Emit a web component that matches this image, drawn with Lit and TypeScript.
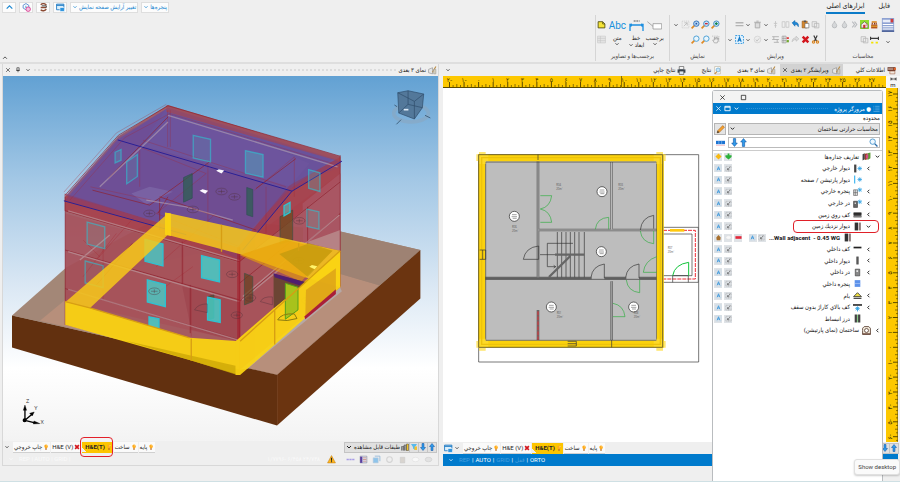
import { LitElement, html, svg, css, nothing } from "lit";
import { customElement, property } from "lit/decorators.js";
import { classMap } from "lit/directives/class-map.js";

const fa = (n: number) => String(Math.abs(n)).replace(/\d/g, (d) => "۰۱۲۳۴۵۶۷۸۹"[+d]) + (n < 0 ? "-" : "");

/* Glyphs on a 16 by 16 grid */
const glyphs: Record<string, unknown> = {
  caret: svg`<path d="M4 6l4 4 4-4" fill="none" stroke="currentColor" stroke-width="2"/>`,
  up: svg`<path d="M3 10l5-5 5 5" fill="none" stroke="currentColor" stroke-width="2"/>`,
  open: svg`<path d="M10 4L6 8l4 4" fill="none" stroke="currentColor" stroke-width="2"/>`,
  close: svg`<path d="M3 3l10 10M13 3L3 13" fill="none" stroke="currentColor" stroke-width="1.6"/>`,
  box: svg`<path d="M3 3h10v10H3z" fill="none" stroke="currentColor" stroke-width="1.6"/>`,
  dock: svg`<path d="M2 3h12v10H2z M2 5h12" fill="none" stroke="currentColor" stroke-width="2"/>`,
  pin: svg`<path d="M5 2h6v7H5zM3 9h10M8 9v5" fill="none" stroke="currentColor" stroke-width="1.6"/>`,
  calc: svg`<path d="M1 0h14v16H1z" fill="#8ea2d2"/><path d="M2 2h9v3H2z" fill="#e9edf8"/><path d="M11 1h3v4h-3z" fill="#d03a3a"/><path d="M2 7.500h12M2 10h12M2 12.500h12" stroke="#fff" stroke-width="1.200"/><path d="M1 15h14" stroke="#41558d" stroke-width="1.500"/>`,
  heat: svg`<path d="M2 8h11v7H2z" fill="#b5541c"/><path d="M3 2h9v3H3z" fill="#e0922e"/><path d="M4 5v3M8 5v3M11 5v3" stroke="#8b3514" stroke-width="2"/><path d="M2 11h11" stroke="#f4c33a" stroke-width="1.500"/>`,
  house: svg`<rect width="16" height="16" fill="#8fdc2c"/><path d="M2 8l6-5 6 5v6H2z" fill="#f2f2e9" stroke="#444"/><path d="M6 9h3v5H6zM11 6v5" fill="#c33" stroke="#c33"/>`,
  waves: svg`<path d="M4 3l4 5-4 5M8 3l4 5-4 5" fill="none" stroke="#b9bcbf" stroke-width="2"/>`,
  drop: svg`<path d="M8 2c1 4 4 5 4 8a4 4 0 0 1-8 0c0-3 3-4 4-8z" fill="#d5d7d9" stroke="#aeb1b4" stroke-width="1.300"/>`,
  span: svg`<path d="M1 3v6M15 3v6M1 6h14" stroke="#3a3a3a" stroke-width="2"/><path d="M2 12h4v3H2zM10 12h4v3h-4z" fill="#f3e400"/>`,
  extent: svg`<path d="M1 4v8M15 4v8M2 8h12M5 5L2 8l3 3M11 5l3 3-3 3" fill="none" stroke="#222" stroke-width="1.800"/>`,
  copy: svg`<path d="M2 3h8v9H2zM6 6h8v8H6z" fill="#ececec" stroke="#b5b5b5" stroke-width="1.300"/>`,
  paste: svg`<path d="M2 2h9v12H2z" fill="#d7882e" stroke="#8c5318"/><path d="M7 6h7v8H7z" fill="#fff" stroke="#555"/><path d="M5 1h4v3H5z" fill="#555"/>`,
  undo: svg`<path d="M2 5l5-4v3c5 0 7 3 6 8-1-3-3-4-6-4v3z" fill="#1f87d5" stroke="#1167ad"/>`,
  split: svg`<path d="M2 3h5v10H2zM9 3h5v10H9z" fill="none" stroke="#c9c9c9" stroke-width="1.500"/>`,
  pole: svg`<path d="M8 2v12M5 6h6M6 10h4" stroke="#c2c2c2" stroke-width="1.500"/>`,
  trash: svg`<path d="M4 5h8v9H4zM2 4h12M6 2h4" fill="#ddd" stroke="#aaa" stroke-width="1.600"/>`,
  lines: svg`<path d="M1 5h14M1 10h14" stroke="#b4b4b4" stroke-width="2.500"/>`,
  cut: svg`<path d="M5 1l5 10M11 1L6 11" stroke="#333" stroke-width="2"/><circle cx="4.500" cy="12.500" r="2" fill="none" stroke="#d98420" stroke-width="2"/><circle cx="11.500" cy="12.500" r="2" fill="none" stroke="#d98420" stroke-width="2"/>`,
  del: svg`<path d="M3 3l10 10M13 3L3 13" stroke="#d3171e" stroke-width="4.500"/>`,
  redo: svg`<path d="M2 12c0-5 3-7 7-7V2l5 5-5 4V8c-3 0-5 1-7 4z" fill="#ddd" stroke="#b5b5b5"/>`,
  gridcut: svg`<path d="M2 2h7v12H2zM2 6h7M2 10h7M5 2v12" fill="#eee" stroke="#888"/><path d="M10 4h4v3h-4z" fill="#d33"/><path d="M10 9h4v4h-4z" fill="#72a82f"/>`,
  table: svg`<path d="M2 3h12M2 8h12M5 13h9M5 3v5M11 8v5" fill="none" stroke="#b0b0b0" stroke-width="1.600"/>`,
  tick: svg`<circle cx="8" cy="8" r="6" fill="#ececec" stroke="#cacaca"/><path d="M5 8l2 3 4-5" fill="none" stroke="#c0c0c0" stroke-width="1.500"/>`,
  seltext: svg`<path d="M1 1h14v14H1z" fill="#e3f3ff" stroke="#2492de" stroke-width="1.600" stroke-dasharray="3 2"/><path d="M5 12l3-8 3 8M6 9h4" fill="none" stroke="#1277c4" stroke-width="2"/>`,
  select: svg`<path d="M2 2h12v12H2z" fill="none" stroke="#bbb" stroke-dasharray="2 1.500"/><path d="M5 11l6-6M6 5h5v5" stroke="#bbb" fill="none" stroke-width="1.500"/>`,
  zoomin: svg`<path d="M1 15l5-5" stroke="#e08a25" stroke-width="3"/><circle cx="9.500" cy="6.500" r="4.800" fill="#d2e9fa" stroke="#3483bf" stroke-width="1.600"/><path d="M7 6.500h5M9.500 4v5" stroke="#15834b" stroke-width="2.200"/>`,
  zoomout: svg`<path d="M1 15l5-5" stroke="#e08a25" stroke-width="3"/><circle cx="9.500" cy="6.500" r="4.800" fill="#d2e9fa" stroke="#3483bf" stroke-width="1.600"/><path d="M7 6.500h5" stroke="#c62a38" stroke-width="2.500"/>`,
  zoomall: svg`<path d="M1 15l5-5" stroke="#e08a25" stroke-width="3"/><circle cx="9.500" cy="6.500" r="4.800" fill="#b9dcf6" stroke="#2a6bb5" stroke-width="1.600"/><path d="M8 5h3v3H8z" fill="#2a52a5"/>`,
  zoom: svg`<path d="M1 15l5-5" stroke="#e08a25" stroke-width="3"/><circle cx="9.500" cy="6.500" r="4.800" fill="#e8f5fd" stroke="#3f9ad2" stroke-width="1.600"/>`,
  search: svg`<path d="M15 15l-5-5" stroke="#2b6ca8" stroke-width="2.500"/><circle cx="6.500" cy="6.500" r="4.800" fill="#eef8ff" stroke="#3f8fcb" stroke-width="1.500"/>`,
  hand: svg`<path d="M3 9l3 5h5l2-5V5l-2 3V4H9v3H7V4H6v5z" fill="#eee" stroke="#999" stroke-width="1.200"/><path d="M2 2h12v12" fill="none" stroke="#999" stroke-dasharray="2 2"/>`,
  note: svg`<path d="M2 3h8l4 4v7H2z" fill="#f5e437" stroke="#4c4a10" stroke-width="1.500"/><path d="M10 3v4h4" fill="none" stroke="#4c4a10" stroke-width="1.300"/>`,
  image: svg`<path d="M1 2h14v12H1z" fill="#e5e5e5" stroke="#c5c5c5"/><path d="M1 6h14M1 10h14M6 2v12" stroke="#c5c5c5"/>`,
  build: svg`<path d="M1 6l7-3v11l-7-2z" fill="#e6e6e6" stroke="#888"/><path d="M14 1L8 11" stroke="#b98b45" stroke-width="2"/><path d="M10 6h4v8h-4z" fill="#d9d0bb" stroke="#999"/>`,
  info: svg`<path d="M1 2h14v7H1z" fill="#6a3a2d"/><path d="M2 4h9M2 6h9" stroke="#f6dccb"/><path d="M5 9h9v5H5z" fill="#f1e8df" stroke="#9d5a3b"/><path d="M12 3h4v4h-4z" fill="#e2662c"/>`,
  doc: svg`<path d="M3 1h10v13H3z" fill="#fff" stroke="#b2a98f"/><circle cx="9" cy="7" r="3.500" fill="#c6e5f8" stroke="#4f94c2"/><path d="M7 10l-4 4" stroke="#c98735" stroke-width="2"/>`,
  print: svg`<path d="M4 1h8v5H4z" fill="#fff" stroke="#333"/><path d="M1 6h14v6H1z" fill="#3d4856"/><path d="M4 9h8v6H4z" fill="#dce8f2" stroke="#333"/>`,
  bulb: svg`<path d="M8 1a5 5 0 0 1 4 8l-2 2H6L4 8a5 5 0 0 1 4-7z" fill="#ffab1c"/><path d="M6 11h4v4H6z" fill="#b56a20"/><path d="M10 3c1 1 1 2 0 3" stroke="#fff0b0" stroke-width="2" fill="none"/>`,
  layout: svg`<path d="M1 2h13v10H1z" fill="#d9effc" stroke="#1b78c2" stroke-width="1.500"/><path d="M1 4h13" stroke="#1b78c2" stroke-width="2"/><path d="M7 8h8v7H7z" fill="#2e94de" stroke="#fff"/>`,
  bug: svg`<path d="M3 3c4-3 9-2 10 1M3 8h10M3 12c3 3 8 2 10-1" fill="none" stroke="#8b4a33" stroke-width="2.500"/><path d="M5 5h8v3" fill="none" stroke="#333" stroke-width="1.500"/>`,
  hexes: svg`<path d="M7 1l5 3v5l-5 3-5-3V4z" fill="none" stroke="#4b84d0" stroke-width="1.500"/><path d="M7 4l-2 4 4 1z" fill="#49b3e5"/><circle cx="11" cy="11" r="4" fill="#f6c0df" stroke="#d53c91" stroke-width="1.500"/>`,
  pencil: svg`<path d="M2 14l1-4L12 1l3 3-9 9z" fill="#f6a02c" stroke="#a2611d"/><path d="M2 14l1-4 3 3z" fill="#333"/>`,
  bricks: svg`<path d="M0 5h16v6H0z" fill="#1b73d2"/><path d="M5 5v6M10 5v6" stroke="#9dcbf4"/><path d="M0 13h16" stroke="#e88c9c"/>`,
  down: svg`<path d="M6 1h4v8h3l-5 6-5-6h3z" fill="#2f9bea" stroke="#0c4fa0"/>`,
  arrowup: svg`<path d="M6 15h4V7h3L8 1 3 7h3z" fill="#2f9bea" stroke="#0c4fa0"/>`,
  list: svg`<path d="M1 3h2M5 3h10M1 7h2M5 7h10M1 11h2M5 11h10M1 15h14" stroke="#6fb6e8" stroke-width="1.500"/>`,
  defs: svg`<path d="M1 4l4-2v11l-4 2z" fill="#444"/><path d="M5 3l5-1v11l-5 1z" fill="#9a3a25"/><path d="M10 2l5-1v10l-5 3z" fill="#5d9b3a"/><path d="M7 5l4-1v7l-4 1z" fill="#d44c8a"/>`,
  wallout: svg`<path d="M2 1h4v14H2z" fill="#444"/><path d="M12 4v8M8 8h8M9 5l6 6M15 5l-6 6" stroke="#2ba0e5" stroke-width="1.300"/>`,
  curtain: svg`<path d="M3 1v14" stroke="#35b2ef" stroke-width="2"/><path d="M12 4v8M8 8h8M9 5l6 6M15 5l-6 6" stroke="#2ba0e5" stroke-width="1.300"/>`,
  winout: svg`<path d="M1 5h7v10H1zM1 10h7M4 5v10" fill="#ddd" stroke="#555"/><path d="M12 1v8M8 5h8M9 2l6 6M15 2L9 8" stroke="#2ba0e5" stroke-width="1.300"/>`,
  doorout: svg`<path d="M1 4h7v11H1z" fill="#666" stroke="#333"/><path d="M3 6h2v3H3z" fill="#eee"/><path d="M12 1v8M8 5h8M9 2l6 6M15 2L9 8" stroke="#2ba0e5" stroke-width="1.300"/>`,
  slab: svg`<path d="M1 4h14v9H1z" fill="#555"/><path d="M1 7h14" stroke="#111" stroke-width="2"/><path d="M1 12h14" stroke="#888" stroke-width="2"/>`,
  wallground: svg`<path d="M3 1h6v14H3z" fill="#333"/><path d="M10 1h4v14h-4z" fill="#8c7a78"/>`,
  floorin: svg`<path d="M1 3h14v3H1z" fill="#222"/>`,
  wallin: svg`<path d="M6 1h4v14H6z" fill="#444"/><path d="M9 2v12" stroke="#999"/>`,
  doorin: svg`<path d="M4 2h8v12H4z" fill="#888" stroke="#333"/><path d="M6 4h3v3H6z" fill="#eee"/>`,
  winin: svg`<path d="M3 2h10v12H3z" fill="#5d92ea"/><path d="M3 8h10" stroke="#b9d2fb"/>`,
  roof: svg`<path d="M1 10l7-7 7 7z" fill="#f0e043" stroke="#333" stroke-width="1.500"/><path d="M1 13h14" stroke="#333" stroke-width="2"/>`,
  garage: svg`<path d="M0 2h16v3H0z" fill="#333"/><path d="M8 6v9M4 10h8M5 7l6 6M11 7l-6 6" stroke="#2ba0e5" stroke-width="1.500"/>`,
  joint: svg`<path d="M3 1h4v14H3zM9 1h4v14H9z" fill="#444"/><path d="M8 1v14" stroke="#6ec06e" stroke-width="1.500"/>`,
  homeview: svg`<path d="M1 8V4l3-3h8l3 3v11H1z" fill="#efe6d8" stroke="#5b4335" stroke-width="1.500"/><circle cx="8" cy="8" r="3.500" fill="#fff" stroke="#5b4335" stroke-width="1.500"/><path d="M1 14h14" stroke="#6b4335" stroke-width="2"/>`,
  mark: svg`<path d="M2 2h12v12H2z" fill="none" stroke="#a7cdea" stroke-dasharray="2 1.500"/><path d="M5 12l3-8 3 8M6 9h4" fill="none" stroke="#3a97dd" stroke-width="2"/>`,
  cursor: svg`<path d="M2 3h12v11H2z" fill="none" stroke="#888" stroke-dasharray="2 1.500"/><path d="M12 4L6 11V7M6 11h4" fill="none" stroke="#555" stroke-width="1.500"/>`,
  plusy: svg`<path d="M8 1l7 7-7 7-7-7z" fill="#f7b914"/>`,
  plusg: svg`<path d="M6 1h4v4h5v4l-7 6-7-6V5h5z" fill="#2cb23a"/>`,
  home: svg`<path d="M3 8l5-6 5 6-1 6H4z" fill="#a8702e"/>`,
  minus: svg`<path d="M1 5h14v6H1z" fill="#e3283b"/>`,
  warn: svg`<path d="M8 1l7 13H1z" fill="#ffb81f" stroke="#c77e10"/><path d="M8 5v5M8 11v2" stroke="#222" stroke-width="2"/>`,
  glasses: svg`<path d="M1 8h14" stroke="#a79ce6" stroke-width="3" stroke-dasharray="4 1"/>`,
  sheet: svg`<path d="M2 2h12v12H2z" fill="#dbe6f3" stroke="#889"/><path d="M2 3h4v11H2z" fill="#5b3fa0"/><path d="M7 5h6M7 8h6M7 11h6" stroke="#c96a50"/>`,
  iso: svg`<path d="M2 5h9v9H2z" fill="#8fc4ea" stroke="#bcd"/><path d="M5 2h9v9" fill="none" stroke="#8fb7d8" stroke-width="1.500"/>`,
  faint: svg`<circle cx="8" cy="8" r="5" fill="none" stroke="#d4d4d4" stroke-width="2"/>`,
  bin: svg`<path d="M4 4h8v10H4z" fill="#d8d4cf" stroke="#c8c8c8"/>`,
  eye: svg`<ellipse cx="8" cy="8" rx="6" ry="4" fill="#f8f8f8" stroke="#ddd"/>`,
  eyegrey: svg`<ellipse cx="8" cy="8" rx="6" ry="4" fill="#e2e2e2" stroke="#ccc"/>`,
  filter: svg`<path d="M2 2h12l-4 6v6l-4-3V8z" fill="#56b9ee"/><path d="M9 7h5v7H9z" fill="#f6c12c"/>`,
  floors: svg`<path d="M1 15V7h5v8M6 15V4h5v11" fill="#9a9a9a" stroke="#444"/><path d="M11 2h4v13h-4z" fill="#f3c529" stroke="#444"/>`,
};

@customElement("ui-glyph")
export class UiGlyph extends LitElement {
  @property() name = "";
  static styles = css`
    :host { display: inline-block; width: 9px; height: 9px; flex: none; }
    svg { display: block; width: 100%; height: 100%; }
  `;
  render() {
    return html`<svg viewBox="0 0 16 16" aria-hidden="true">${glyphs[this.name] ?? nothing}</svg>`;
  }
}
const g = (name: string, cls = "") => html`<ui-glyph class=${cls} name=${name}></ui-glyph>`;

@customElement("scale-ruler")
export class ScaleRuler extends LitElement {
  @property({ type: Boolean }) vertical = false;
  static styles = css`
    :host { display: block; background: #fdc800; overflow: hidden; }
    svg { display: block; width: 100%; height: 100%; }
    text { font-family: "DejaVu Sans", sans-serif; font-size: 6px; fill: #3c3000; text-anchor: middle; }
    path { stroke: #5c4a00; stroke-width: 1; }
    .minor { stroke: #8b7000; }
  `;
  render() {
    if (this.vertical) {
      const marks = Array.from({ length: 24 }, (_, i) => i);
      return html`<svg aria-hidden="true">
        ${marks.map((i) => {
          const y = 6 + i * 14.9;
          return svg`<path d="M7 ${y}h5"/><path class="minor" d="M10 ${y + 3.7}h2M9 ${y + 7.4}h3M10 ${y + 11}h2"/>
            <text transform="translate(6 ${y}) rotate(-90)">${fa(17 - i)}</text>`;
        })}
        <path d="M12 0v2000"/>
      </svg>`;
    }
    const marks = Array.from({ length: 30 }, (_, i) => i - 2);
    return html`<svg aria-hidden="true">
      ${marks.map((n) => {
        const x = 6.5 + (n + 2) * 14.56;
        return svg`<path d="M${x} 6v5"/><path class="minor" d="M${x + 3.6} 9v2M${x + 7.3} 8v3M${x + 11} 9v2"/>
          <text x=${x} y="6">${fa(n)}</text>`;
      })}
      <path d="M0 11.500h2000"/>
      <path d="M178.500 0v12" class="minor"/>
    </svg>`;
  }
}

/* x, y, width, height, slope of the top edge, fill opacity */
const panes: number[][] = [
  [581, 405, 52, 68, 12, 0.12], [738, 451, 53, 68, 12, 0.3], [381, 485, 32, 66, -22, 0.12],
  [346, 456, 18, 32, -8, 0.2], [854, 617, 18, 30, -10, 0.5], [262, 666, 53, 66, 14, 0.1],
  [436, 718, 54, 66, 14, 0.75], [256, 783, 54, 66, 14, 0.05], [606, 767, 54, 66, 13, 0.8],
  [443, 840, 54, 66, 14, 0.75], [624, 892, 38, 68, 8, 0.8], [448, 951, 30, 30, 6, 0.8],
  [928, 508, 34, 56, 10, 0.2], [923, 627, 36, 52, 8, 0.15],
];
const lights: number[][] = [[666, 574], [705, 590], [449, 640], [580, 628], [464, 874], [698, 823], [712, 946], [752, 894], [924, 902], [898, 782], [900, 662]];

@customElement("house-scene")
export class HouseScene extends LitElement {
  static styles = css`
    :host { display: block; min-height: 0; overflow: hidden; background: linear-gradient(#62a1d3, #a2c7e5 28%, #dbe8f4 58%, #fff 80%, #f3f3f3); }
    svg { display: block; width: 100%; height: 100%; }
    text { font-family: "Open Sans", sans-serif; font-size: 17px; fill: #333; }
    .wire { fill: none; stroke: #8e1f2c; stroke-width: 3; opacity: 0.65; }
    .thin { fill: none; stroke: #a3242f; stroke-width: 2; opacity: 0.45; }
    .pale { fill: none; stroke: #c4b4b8; stroke-width: 4; opacity: 0.5; }
    .eave { fill: none; stroke: #2a2096; stroke-width: 3; }
    .ring { fill: none; stroke: #51303a; stroke-width: 2; opacity: 0.6; }
    .dash { fill: none; stroke: #8ba6bf; stroke-width: 11; opacity: 0.6; }
  `;
  render() {
    return html`<svg viewBox="9 225 1308 1101" preserveAspectRatio="xMidYMid slice" role="img" aria-label="نمای ۳ بعدی">
      <polygon points="36,947 200,802 500,640 1024,694 1264,750 833,1125" fill="#a38777"/>
      <polygon points="120,963 280,830 600,760 1024,822 1140,856 833,1125" fill="#b78f7b"/>
      <polygon points="1024,694 1264,750 1140,856 1024,822" fill="#9e8273"/>
      <polygon points="36,947 833,1125 833,1278 36,1043" fill="#62300f"/>
      <polygon points="833,1125 1264,750 1264,896 833,1278" fill="#6b3410"/>
      <polygon points="720,1110 1020,858 1028,874 745,1106" fill="#b5a8a6"/>
      <polygon points="196,590 356,408 505,314 1023,470 1023,862 722,1110 196,975" fill="#a3555d" opacity="0.9"/>
      <polygon points="720,740 1023,520 1023,860 722,1105" fill="#a94853" opacity="0.4"/>
      <polygon points="196,640 470,715 720,790 720,1025 196,905" fill="#a84650" opacity="0.35"/>
      <polygon points="548,860 720,900 720,1025 575,990" fill="#93323f" opacity="0.3"/>
      <polygon points="194,602 354,418 505,322 1028,482 878,573 780,690 720,780 520,690" fill="#6d5099" opacity="0.88"/>
      <polygon points="505,318 1023,470 1023,500 880,560 500,455 420,440" fill="#6065b0" opacity="0.35"/>
      <polygon points="505,345 790,430 930,490 870,560 500,455 440,440" fill="#7a5fa6" opacity="0.4"/>
      <polygon points="470,640 640,500 870,570 730,745 600,690" fill="#7b4a83" opacity="0.35"/>
      <polygon points="395,580 450,560 520,575 440,612" fill="#9185b8" opacity="0.6"/>
      <polygon points="194,580 194,632 720,785 1023,540 1023,470 870,556 715,742" fill="#a9323d" opacity="0.6"/>
      <polygon points="198,586 356,410 505,324 1000,478 872,566 760,680 700,735 540,684" fill="#664c9c" opacity="0.4"/>
      <polygon points="910,610 1023,520 1023,755 912,800" fill="#aa5664" opacity="0.75"/>
      <polygon points="900,735 1023,690 1023,752 905,725" fill="#c0a09c" opacity="0.6"/>
      <polygon points="500,315 1023,468 1023,484 500,334" fill="#a8454c" opacity="0.65"/>
      <path class="wire" d="M196 585L356 405 505 316 1023 468M196 632L720 785M196 750L720 900M196 866L720 1020M720 742V1120M196 590V975M1023 465V860M720 785L1023 545M720 905L1023 640M722 1020L1023 758"/>
      <path class="thin" d="M192 576L350 398 500 312M210 600L375 412 510 340 1000 490M430 420L860 560M272 560L455 600M470 640L620 520 420 440M625 490V690M504 330V440M512 330V440M420 440V560M470 640L720 740M765 570L885 470M800 560V700M885 470V590M650 640L470 800M400 655L290 780M350 700L250 830M550 740V850M575 860V1010M470 880L580 800M310 740V900M250 720L300 770"/>
      <path class="wire" d="M278 570L450 615 630 485M475 640L505 590M480 595V690M480 590L770 690M505 350L326 535M770 565L890 475M925 620V750M720 850L880 720M548 725V852M572 855V1000M398 730L290 855"/>
      <path class="pale" d="M205 632L720 782M205 755L720 905M205 868L720 1022M730 890L1020 645M728 900L850 800M505 345L1015 500M505 365L300 560M440 600L560 620 700 660M240 780L330 705"/>
      <path d="M718 742V1024" stroke="#a31f2c" stroke-width="10" opacity="0.6"/>
      <path class="eave" d="M192 602L560 704M354 419L878 573 1028 483M878 573L730 750"/>
      <g fill="#29604e" stroke="#164f3e" stroke-width="2" opacity="0.7">
        <path d="M742 562l18 6v82l-18-6zM552 532l26-12v74l-26 12z"/>
        <path d="M842 650l38-20v90l-38 12z" fill="#6c4b1b"/>
        <path d="M625 890l18-5v70l-18 5zM825 830l30 10v80l-30-12zM735 820l25 10v75l-25 10z" fill="#65401d"/>
      </g>
      ${panes.map(([x, y, w, h, s, o]) => svg`<polygon points="${x},${y} ${x + w},${y + s} ${x + w},${y + s + h} ${x},${y + h}" fill="#3fd6d0" fill-opacity=${o} stroke="#2fc2d2" stroke-opacity=${o < 0.4 ? 0.6 : 1} stroke-width="4"/>`)}
      ${lights.map(([x, y]) => svg`<ellipse class="ring" cx=${x} cy=${y} rx="17" ry="10"/><path class="ring" d="M${x - 10} ${y}h20M${x} ${y - 6}v12"/>`)}
      <path class="ring" d="M585 930q10-18 38-18v26zM783 905q8-16 36-14v24z"/>
      <g fill="#fcf8ff"><path d="M650 512l8-5 16 4-8 9zM600 572l9-5 17 5-9 9z"/></g>
      <g fill="#f8c91a" opacity="0.85">
        <polygon points="505,639 1023,752 1023,862 912,830 720,762 505,705"/>
        <polygon points="505,640 505,704 270,925 196,907"/>
      </g>
      <polygon points="720,765 860,720 1000,752 905,845" fill="#e9a106" opacity="0.6"/>
      <polygon points="840,762 930,730 1000,752 925,830" fill="#b7960d" opacity="0.6"/>
      <g fill="#fbd412" opacity="0.94">
        <polygon points="196,905 270,924 570,1014 720,1024 720,1126 575,1082 196,975"/>
        <polygon points="708,1024 1023,752 1023,862 722,1126 708,1126"/>
        <polygon points="496,637 514,640 514,708 496,704"/>
      </g>
      <path d="M375 1022L708 1098V1124L575 1082z" fill="#cba607" opacity="0.75"/>
      <path d="M823 822L920 846 823 925z" fill="#6c4534"/>
      <path d="M858 850l38 12v68l-38 28z" fill="#a8c21c" stroke="#54a31c" stroke-width="3"/>
      <path d="M822 820L915 846 900 856 826 832z" fill="#4f1d70"/>
      <path d="M920 870L1010 805V870L918 950z" fill="#d7981a" opacity="0.7"/>
      <path d="M915 950L1010 868V882L918 958z" fill="#a91f39"/>
      <path d="M575 1016V1082M826 930V1034M666 674V755M898 730V752M196 905L270 924 570 1014M722 1024L1023 752" fill="none" stroke="#d79e13" stroke-width="4"/>
      <path d="M835 960q10-20 50-18l8 14q-30 10-58 4z" fill="none" stroke="#8c7a10" stroke-width="3"/>
      <path d="M930 800l8-5 16 4-8 9z" fill="#fff36b"/>
      <g>
        <ellipse class="dash" cx="1236" cy="339" rx="52" ry="26"/>
        <polygon points="1196,277 1227,271 1274,281 1270,322 1246,356 1199,338" fill="#53789a"/>
        <path d="M1196 277L1246 303 1274 281M1246 303V356M1227 271V312L1199 338M1227 312L1270 322M1196 277L1227 271 1274 281 1270 322 1246 356 1199 338z" fill="none" stroke="#2e4b69" stroke-width="2"/>
        <path d="M1214 328h14" stroke="#dce9f5" stroke-width="5"/>
        <path d="M1206 358L1192 372M1278 345l16 8M1186 314l8 5" stroke="#40617e" stroke-width="3"/>
      </g>
      <g stroke="#000" stroke-width="4" fill="#000">
        <path d="M75 1262V1228M75 1262L98 1242M75 1262L102 1269"/>
        <path d="M75 1216l5 16h-10zM103 1237l-14 4 8 8zM120 1272l-18-8-2 9z" stroke-width="1"/>
        <circle cx="74" cy="1262" r="4"/>
      </g>
      <text x="78" y="1210">Z</text><text x="103" y="1232">Y</text><text x="122" y="1272">X</text>
    </svg>`;
  }
}

@customElement("floor-plan")
export class FloorPlan extends LitElement {
  static styles = css`
    :host { display: block; min-height: 0; overflow: hidden; background: #fff; }
    svg { display: block; width: 100%; height: 100%; }
    text { font-family: "Open Sans", sans-serif; font-size: 8px; fill: #555; }
    .line { fill: none; stroke: #333; stroke-width: 2; }
    .wall { fill: none; stroke: #666; stroke-width: 8; }
    .core { fill: none; stroke: #999; stroke-width: 4; }
    .door { fill: none; stroke: #2fae3f; stroke-width: 2; }
    .fire { fill: none; stroke: #ee2d37; stroke-width: 3; stroke-dasharray: 12 3; }
    .ring { fill: #fff; stroke: #222; stroke-width: 2; }
  `;
  render() {
    const rings = [[148, 229], [411, 155], [409, 335], [259, 501], [506, 501]];
    const rooms = [["R06", 141, 263], ["R04", 274, 139], ["R03", 460, 139], ["R07", 608, 327], ["R01", 275, 521], ["R08", 506, 523]] as const;
    return html`<svg viewBox="0 0 1329 1065" preserveAspectRatio="xMinYMin slice" role="img" aria-label="ویرایشگر ۲ بعدی">
      <g transform="translate(66 156)">
        <path class="line" d="M41 44H701V666H41z"/>
        <path d="M50 53H586V614H50z" fill="#bdbdbd"/>
        <path d="M585 262H700V427H585z" fill="#fff" stroke="#333" stroke-width="2"/>
        <path class="fire" d="M594 271H691V417H594"/>
        <path class="line" d="M594 282H681V407H594"/>
        <path d="M615 271h43" stroke="#ffc90e" stroke-width="8"/>
        <path class="wall" d="M219 60V412M219 270H575M219 414H60M219 414H380M418 414H484M522 414H575M440 424V600M440 66V268M219 510V600"/>
        <path class="core" d="M219 60V412M440 66V268M219 270H575M440 424V600"/>
        <path d="M440 66V268" stroke="#bdbdbd" stroke-width="3"/>
        <path class="fire" d="M219 514V600"/>
        <path class="line" d="M60 418H575M225 344H270M358 276V412M277 276V412M290 276V412M303 276V412M316 276V412M329 276V412M342 276V412M324 310H247V380H272M266 376l6 4-6 4M62 66H575V601H62z"/>
        <path d="M270 344H358M316 348L252 411" stroke="#666" stroke-width="7"/>
        <path d="M50 53H586V613H50z" fill="none" stroke="#fbd20c" stroke-width="21"/>
        <path d="M52 36v36M34 53h36M584 36v36M566 53h36M52 596v36M34 613h36M584 596v36M566 613h36" stroke="#ffdd33" stroke-width="20" opacity="0.7"/>
        <path d="M50 53H586V613H50z" fill="none" stroke="#edc30c" stroke-width="4"/>
        <path class="line" d="M41 44H593V622H41zM44 330h18v28H44M53 330v28M308 604h26v14h-26M308 611h26M440 600v22M219 44v16"/>
        <path class="door" d="M226 167h34q-4 34-34 40q30 6 34 40h-34M431 268v-36q-36 2-40 36M526 273q4 34 40 38v-38M575 350q-36 12-40 47h40M484 420q4 34 40 38v-38M444 490q32 6 36 40h-36"/>
        <path class="line" d="M221 318q-40 4-46 40h46zM566 266v-40q-36 6-40 44M418 414v-42q-36 6-40 40M522 414v-42q-36 6-40 40M623 427v-20M670 427v-20M623 407H670"/>
        <path d="M623 407q6-34 48-40v40" fill="none" stroke="#12c43a" stroke-width="3"/>
        ${rings.map(([x, y]) => svg`<circle class="ring" cx=${x} cy=${y} r="15"/><path d="M${x - 7} ${y - 5}h14M${x - 8} ${y + 1}h16M${x - 5} ${y + 6}h12" stroke="#777" stroke-width="2"/>`)}
        ${rooms.map(([t, x, y]) => svg`<text x=${x} y=${y}>${t}</text><text x=${x} y=${y + 12}>20m²</text>`)}
      </g>
    </svg>`;
  }
}

type Row = { label: string; icon: string; level: number; state?: "open" | "closed"; acts?: string[]; ring?: boolean; leaf?: boolean };
const std = ["cursor", "mark"];
const rows: Row[] = [
  { label: "تعاریف جداره‌ها", icon: "defs", level: 0, state: "open", acts: ["plusg", "plusy"] },
  { label: "دیوار خارجي", icon: "wallout", level: 1, state: "closed", acts: std },
  { label: "دیوار پارتیشن / صفحه", icon: "curtain", level: 1, acts: std },
  { label: "پنجره خارجي", icon: "winout", level: 1, state: "closed", acts: std },
  { label: "در خارجي", icon: "doorout", level: 1, state: "closed", acts: std },
  { label: "کف روي زمین", icon: "slab", level: 1, state: "closed", acts: std },
  { label: "دیوار نزدیك زمین", icon: "wallground", level: 1, state: "open", acts: std, ring: true },
  { label: "...Wall adjacent\u00a0 - 0.45 WG", icon: "wallground", level: 2, acts: ["minus", "eye", "home"], leaf: true },
  { label: "کف داخلي", icon: "floorin", level: 1, state: "closed", acts: std },
  { label: "دیوار داخلي", icon: "wallin", level: 1, state: "closed", acts: std },
  { label: "در داخلي", icon: "doorin", level: 1, state: "closed", acts: std },
  { label: "پنجره داخلي", icon: "winin", level: 1, acts: std },
  { label: "بام", icon: "roof", level: 1, state: "closed", acts: std },
  { label: "کف بالاي کاراژ بدون سقف", icon: "garage", level: 1, state: "closed", acts: std },
  { label: "درز انبساط", icon: "joint", level: 1, acts: std },
  { label: "ساختمان (نمای پارتیشن)", icon: "homeview", level: 0, state: "closed" },
];

@customElement("project-browser")
export class ProjectBrowser extends LitElement {
  static styles = css`
    :host { display: flex; flex-direction: column; direction: rtl; background: #fff; border: 1px solid #b9bcbf; border-bottom: 0; border-radius: 3px 3px 0 0; font: 6px/10px Roboto, "DejaVu Sans Condensed", sans-serif; color: #111; }
    button, input, select { font: inherit; color: inherit; padding: 0; margin: 0; border: 0; background: none; box-sizing: border-box; }
    button { display: flex; align-items: center; justify-content: center; }
    .frame { display: flex; direction: ltr; align-items: center; gap: 14px; height: 12px; padding: 0 6px; background: #f3f3f3; }
    .frame ui-glyph, .bar ui-glyph { width: 7px; height: 7px; }
    .bar { display: flex; align-items: center; gap: 2px; height: 11px; padding: 0 2px; background: #007acc; color: #fff; }
    .dots { flex: 1; margin: 0 4px; border-top: 1px dotted #2b92d8; }
    .tools { display: flex; flex-direction: row-reverse; gap: 2px; }
    .form { display: flex; flex-direction: column; gap: 2px; padding: 0 2px 2px 1px; border-bottom: 1px solid #ccc; }
    .form label { line-height: 7px; }
    .line { display: flex; align-items: center; gap: 2px; }
    .pick { position: relative; flex: 1; display: flex; }
    .pick select { appearance: none; flex: 1; height: 12px; line-height: 10px; padding: 0 1px; background: #e4e4e4; border: 1px solid #b5b5b5; }
    .pick ui-glyph { position: absolute; left: 1px; top: 2px; width: 7px; height: 7px; }
    .edit { width: 12px; height: 12px; background: #e4e4e4; border: 1px solid #b5b5b5; }
    .find { flex: 1; display: flex; align-items: center; height: 11px; box-sizing: border-box; border: 1px solid #bbb; padding: 0 1px; }
    .find input { flex: 1; min-width: 0; height: 9px; outline: 0; }
    .side { width: 12px; }
    .tree { list-style: none; margin: 0; padding: 0 1px; height: 185px; display: grid; grid-template-columns: minmax(0, 1fr); grid-auto-rows: 1fr; }
    .row { position: relative; display: flex; align-items: center; gap: 3px; white-space: nowrap; }
    .l1 { padding-right: 9px; }
    .l2 { padding-right: 19px; }
    .twist { width: 7px; height: 7px; }
    .acts { display: flex; gap: 2px; margin-right: auto; }
    .acts button, .mini button { width: 8px; height: 8px; background: #dfe3e7; }
    .acts ui-glyph, .mini ui-glyph { width: 7px; height: 7px; }
    .mini { display: flex; gap: 1px; }
    .leaf { direction: ltr; font-weight: 700; }
    .ring::after { content: ""; position: absolute; right: 2px; width: 84px; top: 0; height: 11px; border: 1px solid #e02028; border-radius: 4px; }
  `;
  render() {
    return html`
      <div class="frame"><button aria-label="Close">${g("close")}</button><button aria-label="Maximize">${g("box")}</button></div>
      <div class="bar">${g("list")}<span>● مرورگر پروژه</span><span class="dots"></span><span class="tools">${g("close")}${g("dock")}${g("caret")}</span></div>
      <div class="form">
        <label for="scope">محدوده</label>
        <div class="line">
          <span class="pick"><select id="scope"><option>محاسبات حرارتی ساختمان</option></select>${g("caret")}</span>
          <button class="edit" aria-label="ویرایش">${g("pencil")}</button>
        </div>
        <div class="line">
          <span class="find">${g("search")}<input aria-label="جستجو" />${g("arrowup")}${g("down")}</span>
          <button class="side" aria-label="جداره">${g("bricks")}</button>
        </div>
      </div>
      <ul class="tree">
        ${rows.map((r) => html`<li class=${classMap({ row: true, ring: !!r.ring, l1: r.level === 1, l2: r.level === 2 })}>
          ${g(r.state === "open" ? "caret" : r.state === "closed" ? "open" : "", "twist")}${g(r.icon)}
          <span class=${classMap({ leaf: !!r.leaf })}>${r.label}</span>
          ${r.leaf ? html`<span class="mini"><button aria-label="انتخاب">${g("cursor")}</button><button aria-label="نشان">${g("mark")}</button></span>` : nothing}
          <span class="acts">${(r.acts ?? []).map((a) => html`<button aria-label=${a}>${g(a)}</button>`)}</span>
        </li>`)}
      </ul>`;
  }
}

@customElement("app-root")
export class AppRoot extends LitElement {
  static styles = css`
    :host { display: flex; flex-direction: column; position: relative; min-height: 100vh; box-sizing: border-box; overflow: hidden; direction: rtl; background: #efefef; border-bottom: 1px solid #cfe0e4; color: #222; font: 6px/10px Roboto, "DejaVu Sans Condensed", sans-serif; }
    button { font: inherit; color: inherit; padding: 0; margin: 0; border: 0; background: none; box-sizing: border-box; display: flex; align-items: center; justify-content: center; white-space: nowrap; }
    .top { display: flex; align-items: center; height: 14px; padding: 0 10px 0 2px; }
    .menu { display: flex; gap: 14px; font-size: 7px; }
    .menu button { height: 14px; border-bottom: 2px solid transparent; }
    .menu .on { border-color: #0b7bc8; color: #111; }
    .quick { display: flex; gap: 3px; margin-right: auto; color: #1a86d0; }
    .quick button { height: 11px; min-width: 14px; background: #fcfcfc; border: 1px solid #dedede; padding: 0 1px; gap: 1px; }
    .groups { display: flex; height: 46px; padding-top: 1px; }
    .group { display: flex; flex-direction: column; justify-content: space-between; border-left: 1px solid #d5d5d5; box-sizing: border-box; padding: 2px 5px 0 0; }
    .group h2 { margin: 0 -5px 0 0; font: inherit; text-align: center; color: #444; white-space: nowrap; }
    .g1 { width: 75px; } .g2 { width: 100px; } .g3 { width: 56px; } .g4 { width: 74px; }
    .body { display: flex; gap: 2px; height: 31px; }
    .cells { display: flex; flex-direction: column; }
    .cells div { display: flex; height: 15px; align-items: center; }
    .cells button { width: 10px; height: 15px; }
    .cells .drop { width: 8px; }
    .drop ui-glyph { width: 6px; height: 6px; }
    .big { flex-direction: column; width: 14px; gap: 6px; justify-content: flex-start; }
    .big .calc { width: 14px; height: 16px; }
    .small { width: 6px; height: 6px; }
    .labels { display: flex; gap: 0; }
    .labels > button { flex-direction: column; justify-content: flex-start; line-height: 7px; width: 19px; }
    .labels .art { display: flex; align-items: center; justify-content: center; width: 100%; height: 17px; }
    .labels .abc { font-size: 10px; color: #1690dd; }
    .art svg { width: 15px; height: 13px; }
    .labels .pair { display: flex; align-items: center; gap: 1px; }
    .labels .cells button { width: 12px; }
    .fold { display: flex; align-items: center; direction: ltr; height: 1px; border-bottom: 2px solid #dedede; padding-left: 2px; }
    .fold ui-glyph { width: 6px; height: 6px; margin-top: -8px; }
    .work { flex: 1; min-height: 0; display: grid; direction: ltr; grid-template-columns: minmax(0, 437fr) minmax(0, 457fr); gap: 4px; padding: 0 0 0 2px; }
    .pane { display: flex; flex-direction: column; min-height: 0; min-width: 0; }
    .left { border: 1px solid #d8d8d8; border-top: 0; }
    .title { display: flex; align-items: center; gap: 2px; height: 12px; padding: 0 1px; white-space: nowrap; }
    .title .small { margin: 0 1px; }
    .dots { flex: 1; border-top: 2px dotted #dcdcdc; }
    .stage { flex: 1 1 0; min-height: 0; }
    .docs { display: flex; direction: rtl; align-items: stretch; height: 12px; padding-right: 2px; gap: 2px; }
    .docs button { gap: 2px; padding: 0 2px 0 11px; }
    .docs .on { background: #d2d2d2; padding: 0 2px; gap: 3px; }
    .docs .all { margin-right: auto; padding: 0 2px; }
    .across { display: flex; height: 12px; }
    .across scale-ruler { flex: 1; }
    .unit { display: flex; flex-direction: column; align-items: center; width: 14px; background: #f7f7f7; line-height: 6px; }
    .unit ui-glyph { height: 6px; }
    .canvas { display: flex; flex: 1 1 0; min-height: 0; }
    .canvas floor-plan { flex: 1; min-width: 0; }
    .canvas scale-ruler { width: 12px; margin-right: 2px; }
    .tabs { display: flex; align-items: center; height: 12px; gap: 1px; padding: 0 1px; }
    .tabs > .small { margin-right: 2px; }
    .tabs .tab { direction: rtl; height: 11px; gap: 1px; padding: 0 1px; background: #fafafa; border-bottom: 1px solid #d0d0d0; position: relative; }
    .tab ui-glyph { width: 6px; height: 8px; }
    .tabs .now { background: linear-gradient(45deg, transparent 3px, #fdc500 3px); border-color: transparent; font-weight: 700; color: #222; padding: 0 1px 0 3px; }
    .ring::after { content: ""; position: absolute; inset: -5px 0 -5px -2px; border: 1px solid #e3202a; border-radius: 4px; }
    .levels { direction: rtl; margin-left: auto; display: flex; height: 11px; background: #e0e0e0; border: 1px solid #c4c4c4; box-sizing: border-box; }
    .levels button { gap: 1px; padding: 0; border-left: 1px solid #c4c4c4; }
    .levels button:last-child { border: 0; }
    .levels ui-glyph { width: 8px; height: 8px; }
    .status { display: flex; align-items: center; height: 12px; padding: 0 5px; gap: 2px; color: #fafafa; }
    .status .small { margin-right: 3px; }
    .status .num { margin-left: auto; direction: ltr; }
    .status .marks { display: flex; gap: 4px; padding-left: 5px; }
    .marks ui-glyph:first-child { margin-right: 6px; }
    .blue { background: #007acc; color: #fff; margin-right: 2px; }
    .blue .off { color: #4a9fdc; }
    .foot { height: 15px; }
    project-browser { position: absolute; top: 90px; right: 17px; bottom: 0; width: 171px; box-sizing: border-box; }
    .tip { position: absolute; right: 0; bottom: 6px; padding: 2px 3px; line-height: 10px; direction: ltr; background: #fafafa; border: 1px solid #e0e0e0; border-radius: 3px; box-shadow: 0 1px 2px #0003; color: #444; }
  `;
  private cells(list: string[]) {
    return list.map((n) => html`<button class=${n === "caret" ? "drop" : ""} aria-label=${n}>${g(n)}</button>`);
  }
  private sheets(ring: boolean) {
    return html`
      <button class="tab">${g("bulb")}چاپ خروجي</button>
      <button class="tab">${g("del")}<bdi>H&amp;E (V)</bdi></button>
      <button class=${classMap({ tab: true, now: true, ring })}>${g("bulb")}<bdi>H&amp;E(T)</bdi></button>
      <button class="tab">${g("bulb")}ساخت</button>
      <button class="tab">${g("bulb")}پایه</button>`;
  }
  render() {
    return html`
      <header>
        <div class="top">
          <nav class="menu"><button>فایل</button><button class="on">ابزارهای اصلی</button></nav>
          <div class="quick">
            <button>پنجره‌ها ${g("caret", "small")}</button>
            <button>تغییر آرایش صفحه نمایش ${g("caret", "small")}</button>
            <button aria-label="چیدمان">${g("layout")}</button>
            <button aria-label="گزارش">${g("bug")}</button>
            <button aria-label="نما">${g("hexes")}</button>
            <button aria-label="بستن نوار">${g("up")}</button>
          </div>
        </div>
        <div class="groups">
          <section class="group g1">
            <div class="body">
              <button class="big" aria-label="محاسبه">${g("calc", "calc")}${g("caret", "small")}</button>
              <div class="cells"><div>${this.cells(["heat", "house", "waves", "drop", "drop"])}</div><div>${this.cells(["span", "copy"])}</div></div>
            </div>
            <h2>محاسبات</h2>
          </section>
          <section class="group g2">
            <div class="cells"><div>${this.cells(["copy", "paste", "undo", "split", "pole", "caret", "trash", "caret", "lines"])}</div>
              <div>${this.cells(["cut", "del", "redo", "gridcut", "table", "caret", "tick", "caret", "seltext", "caret"])}</div></div>
            <h2>ویرایش</h2>
          </section>
          <section class="group g3">
            <div class="cells"><div>${this.cells(["zoomin", "zoomout", "zoomall", "select", "caret"])}</div><div>${this.cells(["hand", "zoom", "zoom"])}</div></div>
            <h2>نمایش</h2>
          </section>
          <section class="group g4">
            <div class="body labels">
              <button><span class="art"><svg viewBox="0 0 45 39"><path d="M1 8L18 22M18 14h26v16H18z" fill="#fff" stroke="#888" stroke-width="2"/></svg></span>برچسب${g("caret", "small")}</button>
              <button><span class="art"><svg viewBox="0 0 45 39"><path d="M3 14V36M42 14V36M3 18H42M8 14L3 18l5 4M37 14l5 4-5 4" fill="none" stroke="#1d8fe0" stroke-width="4"/><path d="M14 6h18" stroke="#888" stroke-width="4" stroke-dasharray="6 2"/></svg></span>خط<span class="pair">ابعاد${g("caret", "small")}</span></button>
              <button><span class="art abc">Abc</span>متن${g("caret", "small")}</button>
              <div class="cells"><div>${this.cells(["note"])}</div><div>${this.cells(["image"])}</div></div>
            </div>
            <h2>برچسب‌ها و تصاویر</h2>
          </section>
        </div>
        <div class="fold">${g("up")}</div>
      </header>
      <main class="work">
        <section class="pane left">
          <div class="title">${g("close", "small")}${g("pin", "small")}${g("caret", "small")}<span class="dots"></span><bdi>نمای ۳ بعدی</bdi>${g("build")}</div>
          <house-scene class="stage"></house-scene>
          <div class="tabs">${g("caret", "small")}${this.sheets(true)}
            <div class="levels"><button aria-label="بالا">${g("arrowup")}</button><button aria-label="پایین">${g("down")}</button><button aria-label="فیلتر">${g("filter")}</button><button>${g("floors")}طبقات قابل مشاهده${g("caret", "small")}</button></div>
          </div>
          <div class="status">${g("caret", "small")}<span>REP | AUTO | GRID |</span><span class="num">۱/۷۷۹۶- ۶/۴۵۸ ۲۴/۷۳۸</span>
            <span class="marks">${["warn", "glasses", "sheet", "iso", "faint", "bin", "eye", "eyegrey"].map((n) => g(n))}</span></div>
        </section>
        <section class="pane">
          <div class="docs">
            <button>${g("info")}اطلاعات کلي</button>
            <button class="on">${g("build")}ویرایشگر ۲ بعدی ${g("close", "small")}</button>
            <button>${g("build")}نمای ۳ بعدی</button>
            <button>${g("doc")}نتایج</button>
            <button>${g("print")}نتایج چاپي</button>
            <button class="all" aria-label="همه">${g("caret", "small")}</button>
          </div>
          <div class="across"><scale-ruler></scale-ruler><div class="unit">${g("extent")}m</div></div>
          <div class="canvas"><floor-plan></floor-plan><scale-ruler vertical></scale-ruler></div>
          <div class="tabs">${g("layout")}${g("caret", "small")}${this.sheets(false)}
            <div class="levels"><button aria-label="بالا">${g("arrowup")}</button><button aria-label="پایین">${g("down")}</button></div></div>
          <div class="status blue">${g("caret", "small")}<span class="off">REP</span>|<span>AUTO</span>|<span class="off">GRID</span>|<span class="off">قفل</span>|<span>ORTO</span></div>
        </section>
      </main>
      <footer class="foot"></footer>
      <project-browser></project-browser>
      <div class="tip" role="tooltip">Show desktop</div>`;
  }
}
